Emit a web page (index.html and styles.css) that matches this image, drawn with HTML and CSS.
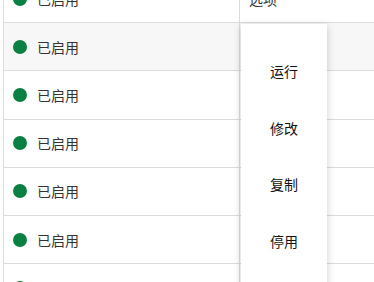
FILE: index.html
```html
<!DOCTYPE html>
<html lang="zh-CN">
<head>
<meta charset="utf-8">
<link rel="stylesheet" href="styles.css">
</head>
<body>
<div class="table">
  <div class="row"><div class="cell status"><span class="dot"></span><span>已启用</span></div><div class="cell opt">选项</div></div>
  <div class="row hover"><div class="cell status"><span class="dot"></span><span>已启用</span></div><div class="cell opt"></div></div>
  <div class="row"><div class="cell status"><span class="dot"></span><span>已启用</span></div><div class="cell opt"></div></div>
  <div class="row"><div class="cell status"><span class="dot"></span><span>已启用</span></div><div class="cell opt"></div></div>
  <div class="row"><div class="cell status"><span class="dot"></span><span>已启用</span></div><div class="cell opt"></div></div>
  <div class="row"><div class="cell status"><span class="dot"></span><span>已启用</span></div><div class="cell opt"></div></div>
  <div class="row"><div class="cell status"><span class="dot"></span><span>已启用</span></div><div class="cell opt"></div></div>
</div>
<div class="menu">
  <div class="item">运行</div>
  <div class="item">修改</div>
  <div class="item">复制</div>
  <div class="item">停用</div>
</div>
</body>
</html>
```
FILE: styles.css
```css
html, body {
  margin: 0;
  padding: 0;
  height: 100%;
  overflow: hidden;
  background: #fff;
  font-family: "Noto Sans CJK SC", "Noto Sans", sans-serif;
  font-size: 14px;
}
.table {
  margin-top: -25px;
  margin-left: 3px;
  border-left: 1px solid #dcdcdc;
}
.row {
  display: flex;
  height: 47.2px;
  border-bottom: 1px solid #dcdcdc;
}
.row.hover {
  background: #f7f7f7;
}
.cell {
  display: flex;
  align-items: center;
}
.status {
  width: 236px;
  padding-left: 9px;
  box-sizing: border-box;
  border-right: 1px solid #dcdcdc;
  color: #333;
  gap: 10px;
}
.opt {
  flex: 1;
  padding-left: 9px;
  color: #333;
}
.dot {
  width: 14px;
  height: 14px;
  border-radius: 50%;
  background: #0b8043;
  flex: none;
}
.menu {
  position: absolute;
  left: 241px;
  top: 24px;
  width: 86px;
  height: 320px;
  background: #fff;
  box-shadow: 0 2px 8px rgba(0, 0, 0, 0.2);
  padding-top: 19px;
  box-sizing: border-box;
}
.item {
  height: 56.5px;
  display: flex;
  align-items: center;
  justify-content: center;
  color: #111;
}
```
